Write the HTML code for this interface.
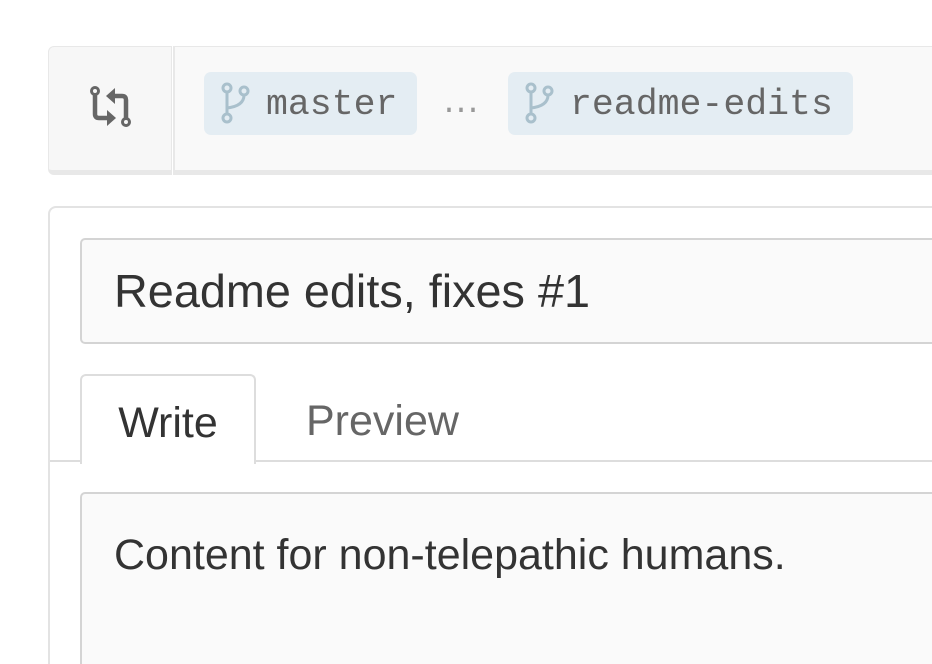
<!DOCTYPE html>
<html style="margin:0;width:932px;height:664px;overflow:hidden"><head><style>
body{margin:0;width:932px;height:664px;background:#fff;position:relative;overflow:hidden;font-family:"Liberation Sans",Helvetica,Arial,sans-serif}
.a{position:absolute;box-sizing:border-box}
.pill{background:#e4edf3;border-radius:7px;font-family:"Liberation Mono","DejaVu Sans Mono",monospace;font-size:36.5px;color:#666;line-height:66px;padding-left:62px}
</style></head><body>
<div class="a" style="left:48px;top:46px;width:124px;height:129px;background:#f7f7f7;border:1px solid #e8e8e8;border-bottom:5px solid #e8e8e8;border-radius:6px 0 0 6px"></div>
<div class="a" style="left:173px;top:46px;width:759px;height:129px;background:#f9f9f9;border-top:1px solid #e8e8e8;border-left:2px solid #e8e8e8;border-bottom:5px solid #e8e8e8"></div>
<svg class="a" style="left:88px;top:84px" width="48" height="48" viewBox="0 0 48 48">
<circle cx="7" cy="7" r="3.5" fill="none" stroke="#666" stroke-width="3"/>
<path d="M7 10.5 V30 Q7 34 11 34 H20" fill="none" stroke="#666" stroke-width="4.5"/>
<path d="M19 26 L28 34 L19 42 Z" fill="#666"/>
<circle cx="38" cy="38" r="3.5" fill="none" stroke="#666" stroke-width="3"/>
<path d="M38 34.5 V16 Q38 12 34 12 H26" fill="none" stroke="#666" stroke-width="4.5"/>
<path d="M27 4 L18 12 L27 20 Z" fill="#666"/>
</svg>
<div class="a pill" style="left:204px;top:72px;width:213px;height:63px">master</div>
<div class="a pill" style="left:508px;top:72px;width:345px;height:63px">readme-edits</div>
<svg class="a" style="left:218px;top:80px" width="36" height="46" viewBox="0 0 36 46"><g fill="none" stroke="#a9c0cc" stroke-width="3"><circle cx="9" cy="8" r="4"/><circle cx="26" cy="11" r="4"/><circle cx="9" cy="38" r="4"/><path d="M9 12 V34 M26 15 Q26 26 9 28"/></g></svg>
<svg class="a" style="left:522px;top:80px" width="36" height="46" viewBox="0 0 36 46"><g fill="none" stroke="#a9c0cc" stroke-width="3"><circle cx="9" cy="8" r="4"/><circle cx="26" cy="11" r="4"/><circle cx="9" cy="38" r="4"/><path d="M9 12 V34 M26 15 Q26 26 9 28"/></g></svg>
<div class="a" style="left:440px;top:72px;line-height:66px;font-family:'Liberation Mono',monospace;font-size:30px;letter-spacing:-6px;color:#999">...</div>
<div class="a" style="left:48px;top:206px;width:884px;height:458px;border:2px solid #e3e3e3;border-right:none;border-bottom:none;border-radius:8px 0 0 0"></div>
<div class="a" style="left:80px;top:238px;width:852px;height:106px;background:#fafafa;border:2px solid #d4d4d4;border-right:none;border-radius:5px 0 0 5px;font-size:46.8px;color:#333;line-height:102px;padding-left:32px;white-space:nowrap">Readme edits, fixes #1</div>
<div class="a" style="left:50px;top:460px;width:882px;height:2px;background:#ddd"></div>
<div class="a" style="left:80px;top:374px;width:176px;height:90px;background:#fff;border:2px solid #ddd;border-bottom:none;border-radius:6px 6px 0 0;font-size:43px;color:#333;line-height:94px;text-align:center">Write</div>
<div class="a" style="left:306px;top:374px;font-size:43px;color:#666;line-height:94px">Preview</div>
<div class="a" style="left:80px;top:492px;width:852px;height:172px;background:#fafafa;border:2px solid #d4d4d4;border-right:none;border-bottom:none;border-radius:5px 0 0 0;font-size:43px;color:#333;padding:37px 0 0 32px;white-space:nowrap">Content for non-telepathic humans.</div>
</body></html>
